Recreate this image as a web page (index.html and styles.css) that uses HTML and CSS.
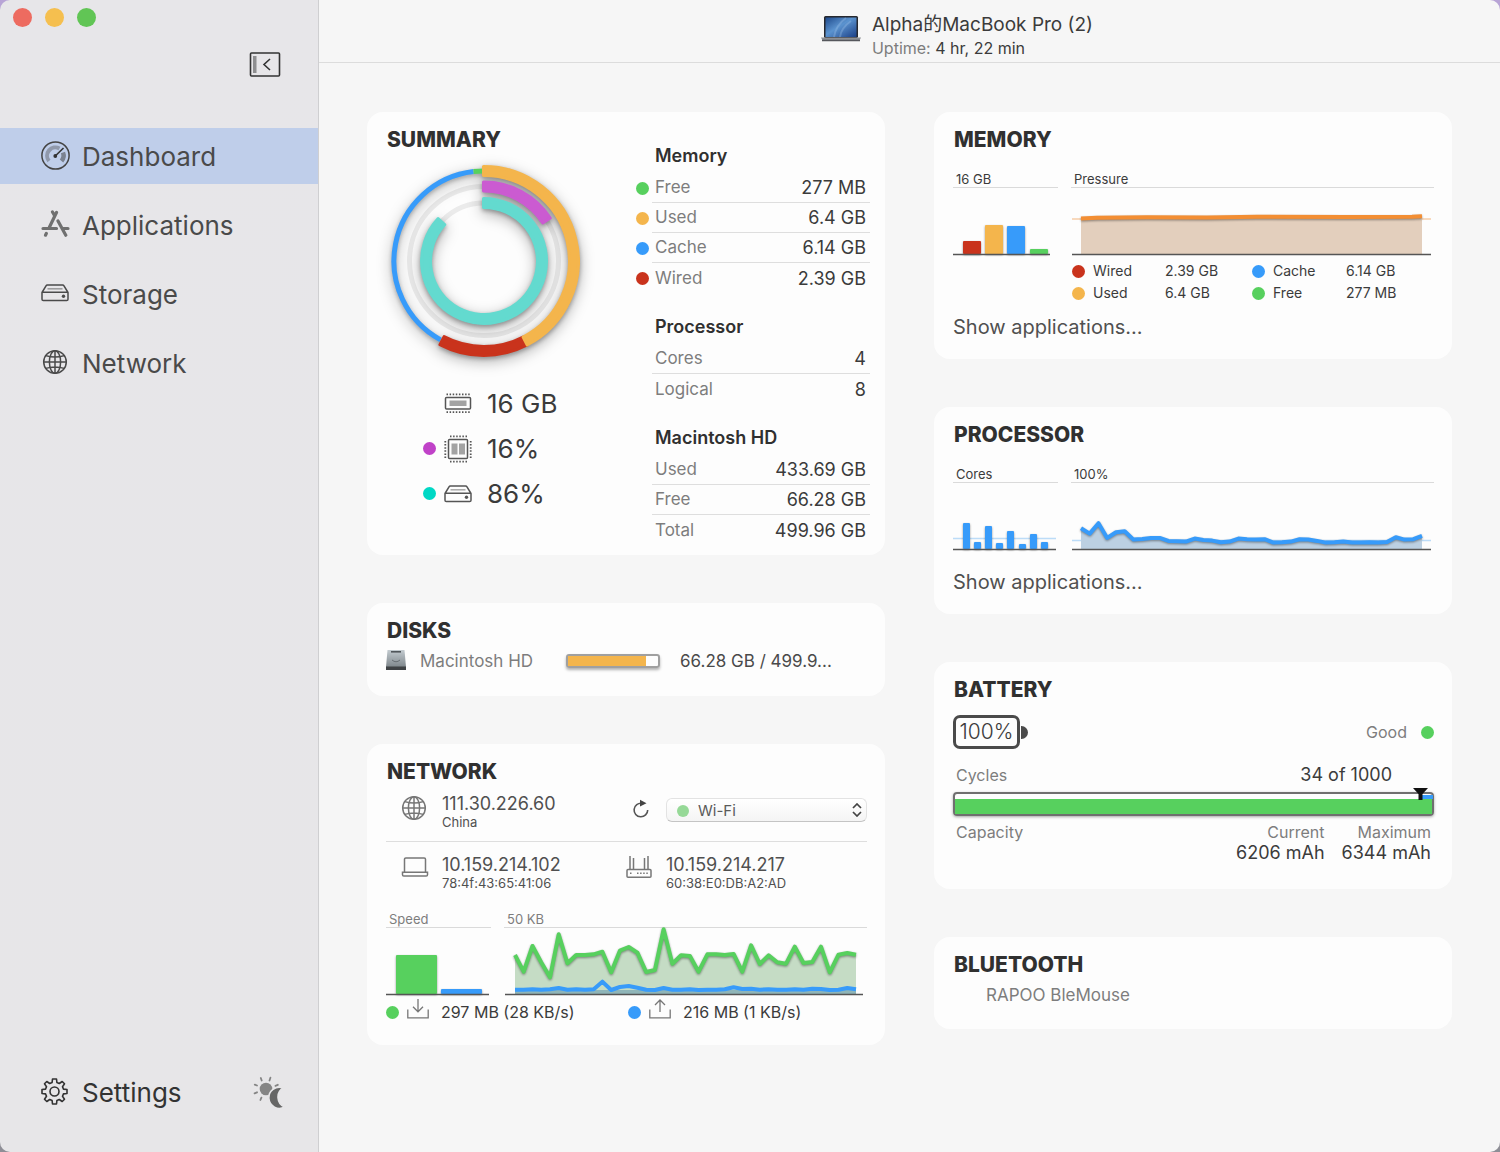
FILE: index.html
```html
<!DOCTYPE html>
<html lang="en">
<head>
<meta charset="utf-8">
<meta name="viewport" content="width=device-width, initial-scale=1">
<title>Dashboard</title>
<link rel="stylesheet" href="styles.css">
</head>
<body>
<svg class="symbols" aria-hidden="true">
  <symbol id="i-globe" viewBox="0 0 26 26">
    <g fill="none" stroke="currentColor" stroke-width="1.5">
      <circle cx="13" cy="13" r="11.3"/>
      <ellipse cx="13" cy="13" rx="5.6" ry="11.3"/>
      <path d="M13 1.7v22.6M1.7 13h22.6M3.8 6.6q9.2 3 18.4 0M3.8 19.4q9.2-3 18.4 0"/>
    </g>
  </symbol>
  <symbol id="i-drive" viewBox="0 0 28 18">
    <g fill="none" stroke="currentColor" stroke-width="1.5" stroke-linejoin="round">
      <path d="M1 8.5v6.7a1.3 1.3 0 0 0 1.3 1.3h23.4a1.3 1.3 0 0 0 1.3-1.3V8.500L23 1.800a1.600 1.600 0 0 0-1.400-.8H6.400A1.600 1.600 0 0 0 5 1.800zM1 8.300h26"/>
      <path d="M6.500 4.800h15" stroke-opacity=".5"/>
    </g>
    <circle cx="22.500" cy="12.300" r="1.700" fill="currentColor"/>
  </symbol>
</svg>
<div class="window">
  <aside class="sidebar">
    <div class="lights">
      <button class="light red" aria-label="Close"></button>
      <button class="light amber" aria-label="Minimise"></button>
      <button class="light lime" aria-label="Zoom"></button>
    </div>
    <button class="toggle" aria-label="Collapse sidebar">
      <svg width="32" height="26" viewBox="0 0 32 26"><rect x="1.500" y="1" width="29" height="23" rx="1" fill="none" stroke="#333" stroke-width="1.600"/><rect x="4" y="4" width="3.500" height="17" fill="#8e8e90"/><path d="M21 7l-6 5.500 6 5.500" fill="none" stroke="#333" stroke-width="1.600"/></svg>
    </button>
    <nav class="nav">
      <a class="nav-item active" href="#dashboard" aria-current="page">
        <svg width="29" height="29" viewBox="0 0 29 29"><circle cx="14.500" cy="14.500" r="13.600" fill="none" stroke="#444" stroke-width="1.500"/><path d="M8 20A8.300 8.300 0 0 1 18.500 7.500" fill="none" stroke="#444" stroke-opacity=".38" stroke-width="4"/><path d="M22 11.500A8.300 8.300 0 0 1 20.500 20" fill="none" stroke="#444" stroke-opacity=".55" stroke-width="4.500"/><path d="M14.500 14.800L22.500 7" stroke="#333" stroke-width="1.600"/><circle cx="14.300" cy="15" r="1.900" fill="#333"/></svg>
        Dashboard
      </a>
      <a class="nav-item" href="#applications">
        <svg width="29" height="28" viewBox="0 0 29 28"><g stroke="#707070" stroke-width="3.200" stroke-linecap="round" fill="none"><path d="M15.500 2.500L8.500 17M11.500 2l2 3.500M2 18.500h13.500M22 18.500h5M17 11l7.800 14.200M5.300 23.500l-.8 1.700"/></g></svg>
        Applications
      </a>
      <a class="nav-item" href="#storage">
        <svg width="28" height="18"><use href="#i-drive"/></svg>
        Storage
      </a>
      <a class="nav-item" href="#network">
        <svg width="28" height="26"><use href="#i-globe"/></svg>
        Network
      </a>
    </nav>
    <div class="sidebar-foot">
      <a class="nav-item settings" href="#settings">
        <svg width="27" height="27" viewBox="0 0 27 27"><g fill="none" stroke="currentColor" stroke-width="1.600" stroke-linejoin="round"><path d="M11.500 1h4l.4 3.500 2.400 1 2.900-2 2.300 2.300-2 2.900 1 2.400 3.500.4v4l-3.500.4-1 2.400 2 2.900-2.300 2.300-2.900-2-2.400 1-.4 3.500h-4l-.4-3.500-2.400-1-2.900 2-2.300-2.300 2-2.900-1-2.400L1 15.500v-4l3.500-.4 1-2.400-2-2.900 2.300-2.300 2.900 2 2.400-1z"/><circle cx="13.500" cy="13.500" r="4.500"/></g></svg>
        Settings
      </a>
      <button class="theme" aria-label="Appearance">
        <svg width="32" height="33" viewBox="0 0 32 33"><circle cx="13" cy="13" r="6.300" fill="#858585"/><g stroke="#858585" stroke-width="1.800" stroke-linecap="round"><path d="M8.700 4.500L7.800 2M16.500 4.500l.9-2.800M4 9.500L1.800 8.600M22.500 9.800l2.300-1M4 16.300l-2.400 1M8.400 21.700l-1 2.300"/></g><path d="M30 12a10.500 10.500 0 1 0 1.500 19A10.800 10.800 0 0 1 30 12z" fill="#666" stroke="#e7e6e8" stroke-width="1.600"/></svg>
      </button>
    </div>
  </aside>

  <main class="main">
    <header class="device">
      <svg width="40" height="28" viewBox="0 0 40 28">
        <defs><linearGradient id="screen" x1="0" y1="0" x2="1" y2="1"><stop offset="0" stop-color="#1f4a8c"/><stop offset=".45" stop-color="#5b93cf"/><stop offset="1" stop-color="#1b3f86"/></linearGradient></defs>
        <rect x="3" y="1" width="34" height="22" rx="1.500" fill="#26282e"/><rect x="4.500" y="2.500" width="31" height="19.500" fill="url(#screen)"/><path d="M13 22Q15 10 25 3M19 22q1-9 11-16" stroke="#a9cbed" stroke-opacity=".3" stroke-width="2" fill="none"/>
        <path d="M0 22.500h40l-1.500 3h-37z" fill="#8d8f94"/><path d="M1 25.500h38" stroke="#55575c" stroke-width="1.500"/>
      </svg>
      <div>
        <h1 class="device-name">Alpha的MacBook Pro (2)</h1>
        <p class="uptime"><span class="muted">Uptime:</span> 4 hr, 22 min</p>
      </div>
    </header>

    <div class="board">
      <div class="column">
        <section class="card summary">
          <div class="overview">
            <h2>SUMMARY</h2>
            <svg class="rings" width="200" height="230" viewBox="-98 -110 200 230" role="img" aria-label="Usage rings">
              <g fill="none" stroke="#ebebeb" stroke-width="5"><circle r="74.500"/><circle r="58"/></g>
              <g class="ring-shadow">
                <path d="M-43.400 78.900A90 90 0 0 1-10.500-89.400" fill="none" stroke="#379bfa" stroke-width="5"/>
                <path d="M-10.500-89.400A90 90 0 0 1 0-90" fill="none" stroke="#57d05e" stroke-width="5"/>
                <g stroke-width="3" stroke-linejoin="round">
                  <path d="M43.200 84A94.500 94.500 0 0 1-44.100 83.600L-39.900 75.600A85.500 85.500 0 0 0 39.100 76z" fill="#c9331c" stroke="#c9331c"/>
                  <path d="M-.5-94.500A94.500 94.500 0 0 1 43.200 84L39.100 76A85.500 85.500 0 0 0-.5-85.500z" fill="#f4b54c" stroke="#f4b54c"/>
                  <path d="M-.5-79A79 79 0 0 1 66.300-43L58.700-38.100A70 70 0 0 0-.5-70z" fill="#cb5bd1" stroke="#cb5bd1"/>
                  <path d="M-.5-62.500A62.500 62.500 0 1 1-45.900-42.400L-39.300-36.300A53.500 53.500 0 1 0-.5-53.500z" fill="#63dacf" stroke="#63dacf"/>
                </g>
              </g>
            </svg>
            <ul class="totals">
              <li><i></i>
                <svg width="28" height="21" viewBox="0 0 28 21"><rect x="1.500" y="4.500" width="25" height="11.500" rx="1" fill="none" stroke="#555" stroke-width="1.500"/><rect x="5.500" y="7.500" width="17" height="5.500" fill="#a3a3a3"/><path d="M2.500 1.300h24M2.500 19.200h24" stroke="#555" stroke-width="1.800" stroke-dasharray="1.500 1.600"/></svg>
                16 GB</li>
              <li><i class="dot purple"></i>
                <svg width="28" height="28" viewBox="0 0 28 28"><rect x="4.500" y="4.500" width="19" height="19" rx="1" fill="none" stroke="#555" stroke-width="1.500"/><path d="M7.500 8.500h6v11h-6zM15 8.500h6v11h-6z" fill="#a3a3a3"/><path d="M6 1.300h17M6 26.700h17M1.300 6v17M26.700 6v17" stroke="#555" stroke-width="1.800" stroke-dasharray="1.500 1.600"/></svg>
                16%</li>
              <li><i class="dot teal"></i>
                <svg class="drive" width="28" height="18"><use href="#i-drive"/></svg>
                86%</li>
            </ul>
          </div>
          <div class="figures">
            <table>
              <caption>Memory</caption>
              <tr><td><i class="dot green"></i></td><th scope="row">Free</th><td>277 MB</td></tr>
              <tr><td><i class="dot yellow"></i></td><th scope="row">Used</th><td>6.4 GB</td></tr>
              <tr><td><i class="dot blue"></i></td><th scope="row">Cache</th><td>6.14 GB</td></tr>
              <tr><td><i class="dot brick"></i></td><th scope="row">Wired</th><td>2.39 GB</td></tr>
            </table>
            <table>
              <caption>Processor</caption>
              <tr><td></td><th scope="row">Cores</th><td>4</td></tr>
              <tr><td></td><th scope="row">Logical</th><td>8</td></tr>
            </table>
            <table>
              <caption>Macintosh HD</caption>
              <tr><td></td><th scope="row">Used</th><td>433.69 GB</td></tr>
              <tr><td></td><th scope="row">Free</th><td>66.28 GB</td></tr>
              <tr><td></td><th scope="row">Total</th><td>499.96 GB</td></tr>
            </table>
          </div>
        </section>

        <section class="card disks">
          <h2>DISKS</h2>
          <div class="disk">
            <svg width="20" height="22" viewBox="0 0 20 22"><defs><linearGradient id="metal" x1="0" y1="0" x2="0" y2="1"><stop offset="0" stop-color="#c3cbd0"/><stop offset="1" stop-color="#7f878c"/></linearGradient></defs><path d="M1.500 0h17l1.500 17H0z" fill="url(#metal)"/><path d="M0 16.500h20V20H0z" fill="#3f4245"/><path d="M5 1.800h10" stroke="#50565a" stroke-width="1.600"/><path d="M6 10q4 3.500 8 0" stroke="#676e73" fill="none"/></svg>
            <span class="muted">Macintosh HD</span>
            <div class="disk-bar" role="meter" aria-label="Macintosh HD used" aria-valuenow="86" aria-valuemin="0" aria-valuemax="100"><div style="width:86%"></div></div>
            <span class="disk-size">66.28 GB / 499.9...</span>
          </div>
        </section>

        <section class="card network">
          <h2>NETWORK</h2>
          <div class="hosts first">
            <svg class="host-icon" width="26" height="26"><use href="#i-globe"/></svg>
            <div class="host">111.30.226.60<small>China</small></div>
            <button class="refresh" aria-label="Refresh"><svg width="18" height="20" viewBox="0 0 18 20"><path d="M10 4.300A6.800 6.800 0 1 0 15.700 11" fill="none" stroke="#555" stroke-width="1.600"/><path d="M8 .8l6.500 3.400L8 7.600z" fill="#444"/></svg></button>
            <div class="picker">
              <select aria-label="Interface"><option>Wi-Fi</option></select>
              <i class="dot"></i>
              <svg width="10" height="14" viewBox="0 0 10 14"><path d="M1 5l4-4 4 4M1 9l4 4 4-4" fill="none" stroke="#444" stroke-width="1.700"/></svg>
            </div>
          </div>
          <div class="hosts">
            <svg class="host-icon" width="28" height="22" viewBox="0 0 28 22"><g fill="none" stroke="currentColor" stroke-width="1.500"><path d="M3.500 16V3.300A1.300 1.300 0 0 1 4.800 2h18.400a1.300 1.300 0 0 1 1.300 1.300V16"/><path d="M1.500 16.300h25v2.400a1.300 1.300 0 0 1-1.300 1.300H2.800a1.300 1.300 0 0 1-1.300-1.300z"/></g></svg>
            <div class="host">10.159.214.102<small>78:4f:43:65:41:06</small></div>
            <svg class="router" width="26" height="24" viewBox="0 0 26 24"><g fill="none" stroke="#777" stroke-width="1.500"><rect x="1" y="14.500" width="24" height="7.800" rx="1"/><path d="M4 1v13.500M7.500 3v11.500M18.500 3v11.500M22 1v13.500"/><path d="M4 18.300h1.500M11 18.300h11" stroke-dasharray="1.500 1.600"/></g></svg>
            <div class="host">10.159.214.217<small>60:38:E0:DB:A2:AD</small></div>
          </div>
          <div class="charts">
            <figure>
              <figcaption class="muted">Speed</figcaption>
              <svg class="plot" viewBox="0 0 105 68" preserveAspectRatio="none">
                <g class="lift"><rect x="10" y="27" width="41" height="39" rx="1" fill="#57d05e"/><rect x="55" y="61" width="41" height="5" rx="1" fill="#379bfa"/></g>
                <path class="axis" d="M0 66.500h103"/>
              </svg>
            </figure>
            <figure>
              <figcaption class="muted">50 KB</figcaption>
              <svg class="plot" viewBox="0 0 363 68" preserveAspectRatio="none">
                <path d="M11 66V27L19.700 43.700 28.500 18 37.200 34.300 46 49.300 54.700 6.300 63.500 35.300 72.200 27 81 27 89.700 26.300 98.400 23.700 107.200 44.300 115.900 22.700 124.700 19 133.400 24.700 142.200 44 150.900 42 159.600 1.300 168.400 35.700 177.100 27.300 185.900 28 194.600 43.700 203.400 26.300 212.100 26.300 220.800 27 229.600 26 238.300 43.700 247.100 17.300 255.800 36 264.600 27.300 273.300 34.300 282.100 35.700 290.800 18.700 299.500 35 308.300 34 317 18.700 325.800 44.300 334.500 26.700 343.300 25 352 26.700V66z" fill="#c5dcc5"/>
                <polyline class="line lift" stroke="#57d05e" points="11,27 19.700,43.700 28.500,18 37.200,34.300 46,49.300 54.700,6.300 63.500,35.300 72.200,27 81,27 89.700,26.300 98.400,23.700 107.200,44.300 115.900,22.700 124.700,19 133.400,24.700 142.200,44 150.900,42 159.600,1.300 168.400,35.700 177.100,27.300 185.900,28 194.600,43.700 203.400,26.300 212.100,26.300 220.800,27 229.600,26 238.300,43.700 247.100,17.300 255.800,36 264.600,27.300 273.300,34.300 282.100,35.700 290.800,18.700 299.500,35 308.300,34 317,18.700 325.800,44.300 334.500,26.700 343.300,25 352,26.700"/>
                <path d="M11 62h341v4H11z" fill="#8fb5b8"/>
                <polyline class="line" stroke="#379bfa" points="11,61.700 19.700,61.700 28.500,61.300 37.200,61.700 46,61.300 54.700,60 63.500,61.700 72.200,61.300 81,61.700 89.700,61.300 98.400,53.700 107.200,62 115.900,59 124.700,58 133.400,59.700 142.200,61.700 150.900,62 159.600,60 168.400,61.700 177.100,61.700 185.900,61.300 194.600,62 203.400,61.700 212.100,61.700 220.800,61.300 229.600,59.300 238.300,61 247.100,60.700 255.800,61.700 264.600,61.300 273.300,61.700 282.100,61.700 290.800,61.300 299.500,61.700 308.300,60.700 317,61 325.800,62 334.500,61.700 343.300,60 352,61.300"/>
                <path class="axis" d="M1 66.500h358"/>
              </svg>
            </figure>
          </div>
          <div class="traffic">
            <span><i class="dot green"></i><svg width="22" height="20" viewBox="0 0 22 20"><path d="M.8 10.500v8.300h20.400v-8.300M11 0v12.500M6 7.800l5 5 5-5" fill="none" stroke="#777" stroke-width="1.300"/></svg>297 MB (28 KB/s)</span>
            <span><i class="dot blue"></i><svg width="22" height="20" viewBox="0 0 22 20"><path d="M.8 10.500v8.300h20.400v-8.300M11 13V1M6 6l5-5 5 5" fill="none" stroke="#777" stroke-width="1.300"/></svg>216 MB (1 KB/s)</span>
          </div>
        </section>
      </div>

      <div class="column">
        <section class="card memory">
          <h2>MEMORY</h2>
          <div class="charts">
            <figure>
              <figcaption>16 GB</figcaption>
              <svg class="plot" viewBox="0 0 105 68" preserveAspectRatio="none">
                <g class="lift"><rect x="10" y="53" width="18" height="13" rx="1" fill="#c9331c"/><rect x="32" y="37" width="18" height="29" rx="1" fill="#f4b54c"/><rect x="54" y="38" width="18" height="28" rx="1" fill="#379bfa"/><rect x="77" y="61" width="18" height="5" rx="1" fill="#57d05e"/></g>
                <path class="axis" d="M0 66.500h97"/>
              </svg>
            </figure>
            <figure>
              <figcaption>Pressure</figcaption>
              <svg class="plot" viewBox="0 0 363 68" preserveAspectRatio="none">
                <path d="M1 31h359" stroke="#f8d9bd" stroke-width="2"/>
                <path d="M10 30h341v36H10z" fill="#e3cfbd"/>
                <path class="line lift" stroke="#f38e33" d="M10 30.500l16-.8 50-.5 60 .2 50-.6 90 .2 65-.2 10-.6"/>
                <path class="axis" d="M1 66.500h359"/>
              </svg>
              <dl class="legend">
                <dt><i class="dot brick"></i>Wired</dt><dd>2.39 GB</dd><dt><i class="dot blue"></i>Cache</dt><dd>6.14 GB</dd>
                <dt><i class="dot yellow"></i>Used</dt><dd>6.4 GB</dd><dt><i class="dot green"></i>Free</dt><dd>277 MB</dd>
              </dl>
            </figure>
          </div>
          <button class="show">Show applications...</button>
        </section>

        <section class="card processor">
          <h2>PROCESSOR</h2>
          <div class="charts">
            <figure>
              <figcaption>Cores</figcaption>
              <svg class="plot" viewBox="0 0 105 68" preserveAspectRatio="none">
                <path d="M0 55.500h103" stroke="#bcdcf8" stroke-width="1.500"/>
                <g class="lift" fill="#379bfa"><rect x="10" y="40" width="7" height="26" rx="1"/><rect x="21" y="59" width="7" height="7" rx="1"/><rect x="32" y="43" width="7" height="23" rx="1"/><rect x="43" y="60" width="7" height="6" rx="1"/><rect x="54" y="48" width="7" height="18" rx="1"/><rect x="66" y="61" width="7" height="5" rx="1"/><rect x="77" y="51" width="7" height="15" rx="1"/><rect x="88" y="59" width="7" height="7" rx="1"/></g>
                <path class="axis" d="M0 66.500h103"/>
              </svg>
            </figure>
            <figure>
              <figcaption>100%</figcaption>
              <svg class="plot" viewBox="0 0 363 68" preserveAspectRatio="none">
                <path d="M1 57.500h359" stroke="#bcdcf8" stroke-width="1.500"/>
                <path d="M10 66V45.200L18.700 50.600 27.500 40.200 36.200 54.900 45 49.200 53.700 48.200 62.500 56.600 89 55 97.400 57.900 115 58.600 123.700 55.600 150 59.300 167.400 55.600 193 56.200 202.400 59.600 228.600 56.200 254.800 59.600 316 59 324.800 54.200 333.500 56.600 342.300 56.200 351 52.900V66z" fill="#bcd0e2"/>
                <polyline class="line lift" stroke="#379bfa" points="10,45.200 18.700,50.600 27.500,40.200 36.200,54.900 45,49.200 53.700,48.200 62.500,56.600 71.200,55.900 80,54.900 88.700,54.900 97.400,57.900 106.200,58.300 114.900,58.600 123.700,55.600 132.400,56.900 141.200,57.600 149.900,59.300 158.600,58.600 167.400,55.600 176.100,56.200 184.900,56.600 193.600,56.200 202.400,59.600 211.100,59.300 219.800,58.600 228.600,56.200 237.300,56.600 246.100,57.900 254.800,59.600 263.600,59.300 272.300,58.600 281.100,59.600 289.800,59.600 298.500,59.300 307.300,59.600 316,58.900 324.800,54.200 333.500,56.600 342.300,56.200 351,52.900"/>
                <path class="axis" d="M1 66.500h359"/>
              </svg>
            </figure>
          </div>
          <button class="show">Show applications...</button>
        </section>

        <section class="card battery">
          <h2>BATTERY</h2>
          <div class="charge">
            <span class="cell">100%</span><span class="nub"></span>
            <span class="health muted">Good<i class="dot green"></i></span>
          </div>
          <div class="cycles"><span class="muted">Cycles</span><span class="value">34 of 1000</span></div>
          <div class="capacity-bar">
            <div class="fill"></div>
            <svg class="marker" width="20" height="12" viewBox="0 0 20 12"><path d="M9 7h11v4H9z" fill="#379bfa"/><path d="M0 0h15L9.500 6v6h-4V6z" fill="#111"/></svg>
          </div>
          <dl class="capacity">
            <div class="lead"><dt>Capacity</dt></div>
            <div><dt>Current</dt><dd class="value">6206 mAh</dd></div>
            <div><dt>Maximum</dt><dd class="value">6344 mAh</dd></div>
          </dl>
        </section>

        <section class="card bluetooth">
          <h2>BLUETOOTH</h2>
          <p class="muted">RAPOO BleMouse</p>
        </section>
      </div>
    </div>
  </main>
</div>
</body>
</html>
```

FILE: styles.css
```css
* { box-sizing: border-box; }

body {
  margin: 0;
  background: linear-gradient(#b8a4d6, #8e8e96);
  color: #3b3b3b;
  font-family: Inter, "Noto Sans CJK SC", sans-serif;
  font-size: 17px;
}

h1, h2, p, ul, dl, dd, figure { margin: 0; padding: 0; }
h1 { font-weight: 400; }
svg { display: block; flex: none; }
button { padding: 0; border: 0; background: none; font: inherit; color: inherit; }

.symbols { position: absolute; width: 0; height: 0; }
.muted { color: #7d7d7d; }
.value { font-size: 18px; }

.dot { display: block; flex: none; width: 13px; height: 13px; border-radius: 50%; }
.green { background: #57d05e; }
.yellow { background: #f4b54c; }
.blue { background: #379bfa; }
.brick { background: #c9331c; }
.purple { background: #c042c8; }
.teal { background: #00d8c5; }

/* Window and sidebar */
.window {
  display: grid;
  grid-template-columns: 319px 1fr;
  min-height: 100vh;
  border-radius: 10px;
  overflow: hidden;
}

.sidebar {
  display: flex;
  flex-direction: column;
  border-right: 1px solid #cfcfd1;
  background: linear-gradient(#e7e6e9, #e7e6e8);
  color: #4a4a4a;
}

.lights { display: flex; gap: 13px; padding: 8px 13px 0; }
.light { width: 19px; height: 19px; border-radius: 50%; }
.red { background: #ed6b60; }
.amber { background: #f5bf4f; }
.lime { background: #61c555; }

.toggle { align-self: flex-end; margin: 25px 37px 50px 0; }

.nav { display: flex; flex-direction: column; gap: 13px; }
.nav-item {
  display: grid;
  grid-template-columns: 41px auto;
  align-items: center;
  height: 56px;
  padding-left: 41px;
  color: inherit;
  font-size: 26px;
  text-decoration: none;
}
.nav-item svg { margin-bottom: 2px; }
.active { background: #bfceea; }

.sidebar-foot {
  display: flex;
  align-items: center;
  justify-content: space-between;
  margin-top: auto;
  padding: 0 33px 32px 0;
}
.settings { color: #333; }

/* Main area */
.main { background: #f6f6f6; }

.device {
  display: flex;
  justify-content: center;
  gap: 11px;
  padding: 13px 0 3px 95px;
  border-bottom: 1px solid #dcdcdc;
}
.device > svg { margin-top: 2px; }
.device-name { font-size: 19px; line-height: 24px; }
.uptime { font-size: 16px; line-height: 22px; }

.board {
  display: grid;
  grid-template-columns: 1fr 1fr;
  gap: 49px;
  padding: 49px 48px;
}
.column { display: flex; flex-direction: column; gap: 48px; min-width: 0; }

.card { padding: 16px 18px 20px 19px; border-radius: 16px; background: #fdfdfd; }
.card h2 { padding-left: 1px; color: #303030; font-size: 21px; font-weight: 800; line-height: 23px; }

/* Summary */
.summary {
  display: grid;
  grid-template-columns: 1fr 234px;
  padding-right: 15px;
  padding-bottom: 10px;
}
.rings { overflow: visible; }
.ring-shadow { filter: drop-shadow(0 2px 2px rgba(0, 0, 0, .3)) drop-shadow(0 4px 7px rgba(0, 0, 0, .3)); }

.totals { list-style: none; padding-left: 37px; font-size: 26px; }
.totals li {
  display: grid;
  grid-template-columns: 21px 43px auto;
  align-items: center;
  height: 45px;
}
.drive { color: #555; }

.figures { display: flex; flex-direction: column; gap: 17px; padding-top: 11px; }
.figures table { width: 100%; border-spacing: 0; }
.figures caption { padding-left: 19px; color: #303030; font-size: 18px; font-weight: 600; line-height: 34px; text-align: left; }
.figures td, .figures th { height: 30px; padding: 0; line-height: 29px; }
.figures td:first-child { width: 16px; }
.figures th { padding-left: 3px; color: #7d7d7d; font-weight: 400; text-align: left; }
.figures td:last-child { padding-right: 4px; font-size: 18px; text-align: right; }
.figures tr:not(:last-child) > :not(:first-child) { border-bottom: 1px solid #dedede; }

/* Disks */
.disks { padding-bottom: 23px; }
.disk {
  display: grid;
  grid-template-columns: 34px 146px 114px 1fr;
  align-items: center;
  margin-top: 7px;
  line-height: 24px;
}
.disk-bar {
  width: 94px;
  height: 14px;
  padding: 1px;
  border: 2px solid #a0a0a0;
  border-radius: 3px;
  box-shadow: 0 2px 3px rgba(0, 0, 0, .3);
}
.disk-bar div { height: 100%; background: #f4b54c; box-shadow: 0 0 0 1px #f4b54c; }
.disk-size { color: #4a4a4a; }

/* Network */
.network { padding-bottom: 17px; }
.hosts {
  display: grid;
  grid-template-columns: 56px 184px 40px 1fr;
  column-gap: 0;
  align-items: start;
  padding-top: 13px;
  color: #505050;
}
.first { padding: 11px 0; border-bottom: 1px solid #dedede; }
.host { font-size: 18px; line-height: 20px; }
.host small { display: block; font-size: 13px; line-height: 16px; }
.host-icon { margin: 1px 0 0 15px; color: #777; }
.refresh { margin: 5px 0 0 6px; justify-self: start; }

.picker { position: relative; margin-top: 4px; }
.picker select {
  display: block;
  width: 100%;
  height: 24px;
  padding: 1px 31px 0;
  border: 1px solid #e3e3e3;
  border-bottom-color: #c4c4c4;
  border-radius: 6px;
  background: linear-gradient(#fff, #f4f4f4);
  color: #5a5a5a;
  font: 15px Inter, sans-serif;
  appearance: none;
}
.picker .dot { position: absolute; left: 11px; top: 7px; width: 12px; height: 12px; background: #96d997; }
.picker svg { position: absolute; right: 5px; top: 5px; }

/* Charts shared by several cards */
.charts {
  display: grid;
  grid-template-columns: 105px 1fr;
  gap: 13px;
  margin-top: 20px;
}
figcaption { padding-left: 3px; border-bottom: 1px solid #dadada; font-size: 13px; line-height: 16px; }
.plot { width: 100%; height: 68px; overflow: visible; }
.line { fill: none; stroke-width: 4; stroke-linejoin: round; }
.axis { stroke: #555; stroke-width: 1.5; }
.lift { filter: drop-shadow(0 1px 1px rgba(0, 0, 0, .4)); }

.traffic { display: grid; grid-template-columns: 242px 1fr; font-size: 16px; line-height: 32px; }
.traffic span { display: flex; align-items: center; }
.traffic svg { margin: 0 12px 6px 8px; }

.legend {
  display: grid;
  grid-template-columns: 94px 86px 95px 1fr;
  padding-top: 4px;
  font-size: 14px;
  line-height: 22px;
}
.legend dt { display: flex; align-items: center; gap: 8px; padding-left: 1px; }

.show { display: block; margin-top: 11px; color: #505050; font-size: 20px; line-height: 24px; }
.processor .show { margin-top: 19px; }

/* Battery */
.battery { padding-bottom: 26px; }
.charge { display: flex; align-items: center; margin-top: 14px; font-size: 16px; }
.cell {
  width: 67px;
  border: 3px solid #4a4a4a;
  border-radius: 7px;
  font-size: 21px;
  font-weight: 300;
  line-height: 28px;
  text-align: center;
}
.nub { width: 7px; height: 13px; margin-left: 1px; border-radius: 0 7px 7px 0; background: #4a4a4a; }
.health { display: flex; align-items: center; gap: 14px; margin-left: auto; }
.cycles {
  display: flex;
  justify-content: space-between;
  padding: 15px 42px 6px 3px;
  line-height: 22px;
}
.cycles .muted, .capacity dt { font-size: 16px; }

.capacity-bar {
  position: relative;
  height: 24px;
  padding-top: 5px;
  border: 2px solid #6f6f6f;
  border-radius: 4px;
  box-shadow: 0 1px 3px rgba(0, 0, 0, .35);
}
.fill { height: 15px; background: #57d05e; }
.marker { position: absolute; right: -1px; top: -6px; }

.capacity { display: flex; gap: 17px; padding: 5px 3px 0; text-align: right; }
.capacity dt { color: #7d7d7d; line-height: 22px; }
.capacity dd { line-height: 20px; }
.lead { margin-right: auto; }

/* Bluetooth */
.bluetooth { padding-bottom: 22px; }
.bluetooth p { padding: 7px 0 0 33px; line-height: 24px; }
```
